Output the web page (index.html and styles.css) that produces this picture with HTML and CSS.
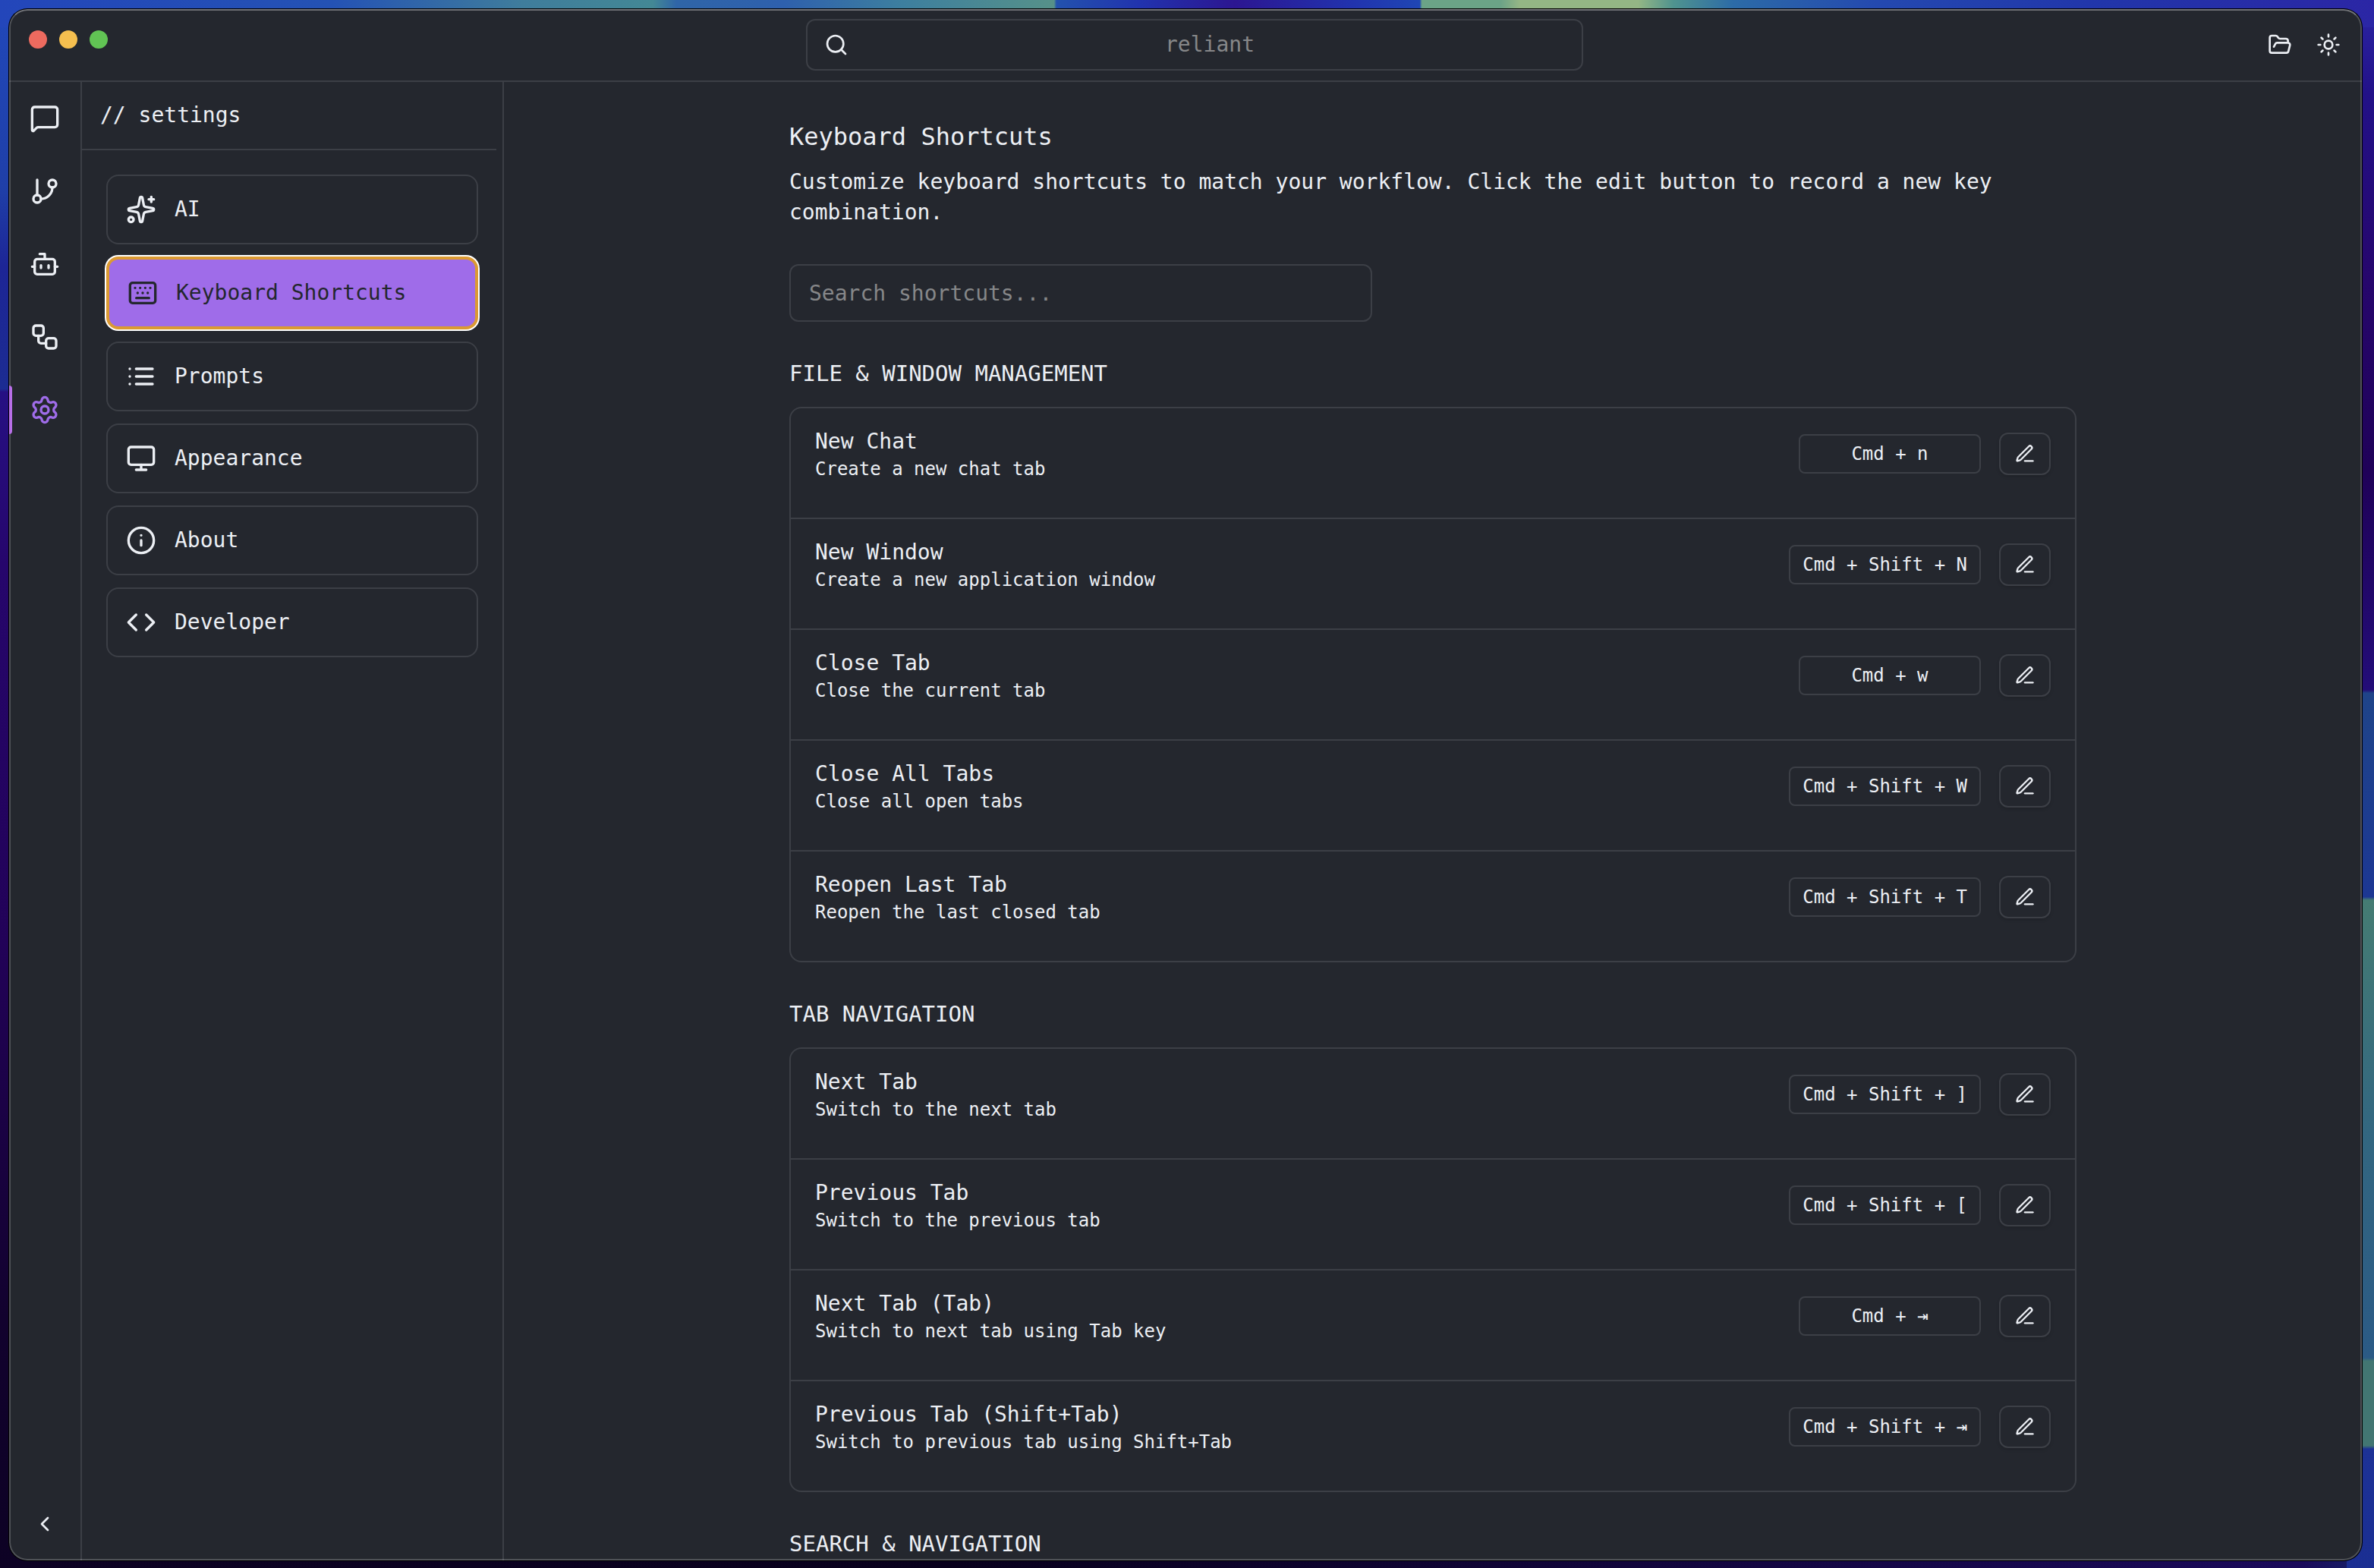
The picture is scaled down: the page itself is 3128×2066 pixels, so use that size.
FILE: index.html
```html
<!DOCTYPE html>
<html lang="en">
<head>
<meta charset="utf-8">
<meta name="viewport" content="width=device-width, initial-scale=1">
<title>reliant – settings</title>
<link rel="stylesheet" href="styles.css">
</head>
<body>
<svg class="sprite" aria-hidden="true">
  <symbol id="i-pen" viewBox="0 0 24 24"><path d="M12 20h9"/><path d="M16.376 3.622a1 1 0 0 1 3.002 3.002L7.368 18.635a2 2 0 0 1-.855.506l-2.872.838a.5.5 0 0 1-.62-.62l.838-2.872a2 2 0 0 1 .506-.854z"/></symbol>
</svg>
<div class="window">
  <header class="titlebar">
    <div class="lights" aria-hidden="true"><span class="light red"></span><span class="light amber"></span><span class="light green"></span></div>
    <label class="command">
      <svg class="icon sm" viewBox="0 0 24 24" aria-hidden="true"><circle cx="11" cy="11" r="8"/><path d="m21 21-4.3-4.3"/></svg>
      <input type="text" placeholder="reliant" aria-label="Search reliant">
    </label>
    <div class="actions">
      <button type="button" aria-label="Open folder"><svg class="icon sm" viewBox="0 0 24 24"><path d="m6 14 1.5-2.9A2 2 0 0 1 9.24 10H20a2 2 0 0 1 1.94 2.5l-1.54 6a2 2 0 0 1-1.95 1.5H4a2 2 0 0 1-2-2V5a2 2 0 0 1 2-2h3.9a2 2 0 0 1 1.69.9l.81 1.2a2 2 0 0 0 1.67.9H18a2 2 0 0 1 2 2v2"/></svg></button>
      <button type="button" aria-label="Toggle theme"><svg class="icon sm" viewBox="0 0 24 24"><circle cx="12" cy="12" r="4"/><path d="M12 2v2M12 20v2M4.93 4.93l1.41 1.41M17.66 17.66l1.41 1.41M2 12h2M20 12h2M6.34 17.66l-1.41 1.41M19.07 4.93l-1.41 1.41"/></svg></button>
    </div>
  </header>
  <div class="body">
    <nav class="rail" aria-label="Main">
      <button type="button" aria-label="Chat"><svg class="icon" viewBox="0 0 24 24"><path d="M22 17a2 2 0 0 1-2 2H6.828a2 2 0 0 0-1.414.586l-2.202 2.202A.71.71 0 0 1 2 21.286V5a2 2 0 0 1 2-2h16a2 2 0 0 1 2 2z"/></svg></button>
      <button type="button" aria-label="Branches"><svg class="icon" viewBox="0 0 24 24"><path d="M6 3v12"/><circle cx="18" cy="6" r="3"/><circle cx="6" cy="18" r="3"/><path d="M18 9a9 9 0 0 1-9 9"/></svg></button>
      <button type="button" aria-label="Agents"><svg class="icon" viewBox="0 0 24 24"><path d="M12 8V4H8"/><rect width="16" height="12" x="4" y="8" rx="2"/><path d="M2 14h2M20 14h2M15 13v2M9 13v2"/></svg></button>
      <button type="button" aria-label="Workflows"><svg class="icon" viewBox="0 0 24 24"><rect width="8" height="8" x="3" y="3" rx="2"/><path d="M7 11v4a2 2 0 0 0 2 2h4"/><rect width="8" height="8" x="13" y="13" rx="2"/></svg></button>
      <button type="button" class="current" aria-label="Settings"><svg class="icon" viewBox="0 0 24 24"><path d="M9.671 4.136a2.34 2.34 0 0 1 4.659 0 2.34 2.34 0 0 0 3.319 1.915 2.34 2.34 0 0 1 2.33 4.033 2.34 2.34 0 0 0 0 3.831 2.34 2.34 0 0 1-2.33 4.033 2.34 2.34 0 0 0-3.319 1.915 2.34 2.34 0 0 1-4.659 0 2.34 2.34 0 0 0-3.32-1.915 2.34 2.34 0 0 1-2.33-4.033 2.34 2.34 0 0 0 0-3.831A2.34 2.34 0 0 1 6.35 6.051a2.34 2.34 0 0 0 3.319-1.915"/><circle cx="12" cy="12" r="3"/></svg></button>
      <button type="button" class="collapse" aria-label="Collapse sidebar"><svg class="icon sm" viewBox="0 0 24 24"><path d="m15 18-6-6 6-6"/></svg></button>
    </nav>
    <aside class="sidebar">
      <h2 class="sidebar-title">// settings</h2>
      <nav class="sections" aria-label="Settings">
        <a href="#ai"><svg class="icon" viewBox="0 0 24 24"><path d="M11.017 2.814a1 1 0 0 1 1.966 0l1.051 5.558a2 2 0 0 0 1.594 1.594l5.558 1.051a1 1 0 0 1 0 1.966l-5.558 1.051a2 2 0 0 0-1.594 1.594l-1.051 5.558a1 1 0 0 1-1.966 0l-1.051-5.558a2 2 0 0 0-1.594-1.594l-5.558-1.051a1 1 0 0 1 0-1.966l5.558-1.051a2 2 0 0 0 1.594-1.594z"/><path d="M20 2v4M22 4h-4"/><circle cx="4" cy="20" r="2"/></svg>AI</a>
        <a href="#shortcuts" class="selected" aria-current="page"><svg class="icon" viewBox="0 0 24 24"><rect width="20" height="16" x="2" y="4" rx="2"/><path d="M10 8h.01M12 12h.01M14 8h.01M16 12h.01M18 8h.01M6 8h.01M7 16h10M8 12h.01"/></svg>Keyboard Shortcuts</a>
        <a href="#prompts"><svg class="icon" viewBox="0 0 24 24"><path d="M3 12h.01M3 18h.01M3 6h.01M8 12h13M8 18h13M8 6h13"/></svg>Prompts</a>
        <a href="#appearance"><svg class="icon" viewBox="0 0 24 24"><rect width="20" height="14" x="2" y="3" rx="2"/><path d="M8 21h8M12 17v4"/></svg>Appearance</a>
        <a href="#about"><svg class="icon" viewBox="0 0 24 24"><circle cx="12" cy="12" r="10"/><path d="M12 16v-4M12 8h.01"/></svg>About</a>
        <a href="#developer"><svg class="icon" viewBox="0 0 24 24"><path d="m16 18 6-6-6-6M8 6l-6 6 6 6"/></svg>Developer</a>
      </nav>
    </aside>
    <main class="content">
      <div class="page">
        <h1>Keyboard Shortcuts</h1>
        <p class="intro">Customize keyboard shortcuts to match your workflow. Click the edit button to record a new key combination.</p>
        <input class="filter" type="text" placeholder="Search shortcuts..." aria-label="Search shortcuts">

        <section>
          <h2>FILE &amp; WINDOW MANAGEMENT</h2>
          <ul class="card">
            <li><div class="info"><h3>New Chat</h3><p>Create a new chat tab</p></div><kbd>Cmd + n</kbd><button type="button" aria-label="Edit New Chat"><svg class="icon xs"><use href="#i-pen"/></svg></button></li>
            <li><div class="info"><h3>New Window</h3><p>Create a new application window</p></div><kbd>Cmd + Shift + N</kbd><button type="button" aria-label="Edit New Window"><svg class="icon xs"><use href="#i-pen"/></svg></button></li>
            <li><div class="info"><h3>Close Tab</h3><p>Close the current tab</p></div><kbd>Cmd + w</kbd><button type="button" aria-label="Edit Close Tab"><svg class="icon xs"><use href="#i-pen"/></svg></button></li>
            <li><div class="info"><h3>Close All Tabs</h3><p>Close all open tabs</p></div><kbd>Cmd + Shift + W</kbd><button type="button" aria-label="Edit Close All Tabs"><svg class="icon xs"><use href="#i-pen"/></svg></button></li>
            <li><div class="info"><h3>Reopen Last Tab</h3><p>Reopen the last closed tab</p></div><kbd>Cmd + Shift + T</kbd><button type="button" aria-label="Edit Reopen Last Tab"><svg class="icon xs"><use href="#i-pen"/></svg></button></li>
          </ul>
        </section>

        <section>
          <h2>TAB NAVIGATION</h2>
          <ul class="card">
            <li><div class="info"><h3>Next Tab</h3><p>Switch to the next tab</p></div><kbd>Cmd + Shift + ]</kbd><button type="button" aria-label="Edit Next Tab"><svg class="icon xs"><use href="#i-pen"/></svg></button></li>
            <li><div class="info"><h3>Previous Tab</h3><p>Switch to the previous tab</p></div><kbd>Cmd + Shift + [</kbd><button type="button" aria-label="Edit Previous Tab"><svg class="icon xs"><use href="#i-pen"/></svg></button></li>
            <li><div class="info"><h3>Next Tab (Tab)</h3><p>Switch to next tab using Tab key</p></div><kbd>Cmd + ⇥</kbd><button type="button" aria-label="Edit Next Tab (Tab)"><svg class="icon xs"><use href="#i-pen"/></svg></button></li>
            <li><div class="info"><h3>Previous Tab (Shift+Tab)</h3><p>Switch to previous tab using Shift+Tab</p></div><kbd>Cmd + Shift + ⇥</kbd><button type="button" aria-label="Edit Previous Tab (Shift+Tab)"><svg class="icon xs"><use href="#i-pen"/></svg></button></li>
          </ul>
        </section>

        <section>
          <h2>SEARCH &amp; NAVIGATION</h2>
        </section>
      </div>
    </main>
  </div>
</div>
</body>
</html>
```

FILE: styles.css
```css
:root {
  --bg: #24272e;
  --line: #3c3f46;
  --text: #eceff4;
  --muted: #868789;
  --accent: #9f6ce9;
  --focus: #db9a33;
}

* { box-sizing: border-box; margin: 0; padding: 0; }

body {
  height: 100vh;
  padding: 12px 16px 10px 12px;
  overflow: hidden;
  color: var(--text);
  font: 28px/40px "DejaVu Sans Mono", monospace;
  /* desktop wallpaper visible round the window: top, left, right, bottom */
  background:
    linear-gradient(90deg, #2346ba 0, #2452b4 14%, #3f7d9c 22%, #438895 27.5%, #2f65a8 28.5%, #2e60ad 33%, #3d7f9f 38%, #569189 44.4%, #2352ad 44.5%, #2133ae 48%, #2c1691 52%, #2133ae 57%, #1f46b4 59.8%, #6ba387 59.9%, #6ba387 63.2%, #94b685 64%, #94b685 69%, #4f938f 70.5%, #2c6ba7 73%, #2449b0 79%, #2136aa 88%, #2b26a5 100%) top / 100% 36px no-repeat,
    linear-gradient(180deg, #2148ba 0, #1f3fa8 12%, #1d2596 17%, #1c2c92 24.8%, #261083 25%, #26066c 36%, #220258 60%, #12022e 84%, #0d0224 100%) left / 36px 100% no-repeat,
    linear-gradient(180deg, #2b26a5 0, #221188 6%, #26066c 18%, #1f0158 30%, #230d78 44%, #1f4489 44.2%, #1c3793 57.2%, #457c73 57.4%, #336780 72%, #2b5a85 86.6%, #427672 86.8%, #427672 92.2%, #1d3296 92.4%, #1a2e92 100%) right / 36px 100% no-repeat,
    linear-gradient(90deg, #0d0224 0, #08001c 40%, #1a0a5a 97%, #142468 100%) #12022e;
}

button { background: none; border: 0; color: inherit; font: inherit; cursor: pointer; }
input { background: none; border: 0; outline: 0; color: inherit; font: inherit; min-width: 0; }
input::placeholder { color: var(--muted); opacity: 1; }
h1, h2, h3 { font-weight: normal; }
ul { list-style: none; }

.sprite { display: none; }
.icon {
  display: block;
  flex: none;
  width: 40px;
  height: 40px;
  fill: none;
  stroke: currentColor;
  stroke-width: 2;
  stroke-linecap: round;
  stroke-linejoin: round;
}
.icon.sm { width: 32px; height: 32px; }
.icon.xs { width: 28px; height: 28px; }

.window {
  position: relative;
  display: flex;
  flex-direction: column;
  height: 100%;
  border-radius: 24px;
  background: var(--bg);
  box-shadow: 0 0 0 1px #000;
  overflow: hidden;
}
/* light rim drawn over the window's edge */
.window::after {
  content: "";
  position: absolute;
  inset: 0;
  border: 2px solid rgba(255, 255, 255, 0.2);
  border-top-color: rgba(255, 255, 255, 0.35);
  border-radius: 24px;
  pointer-events: none;
}

/* title bar */
.titlebar {
  display: flex;
  flex: none;
  align-items: center;
  justify-content: space-between;
  height: 96px;
  padding: 0 28px 0 26px;
  border-bottom: 2px solid var(--line);
}
.lights { display: flex; gap: 16px; align-self: flex-start; padding: 28px 18px 0 0; }
.light { width: 24px; height: 24px; border-radius: 50%; }
.red { background: #ed6a5f; }
.amber { background: #f5bf4f; }
.green { background: #61c454; }
.command {
  display: flex;
  align-items: center;
  gap: 8px;
  width: 50%;
  max-width: 1024px;
  height: 68px;
  padding: 0 22px;
  border: 2px solid var(--line);
  border-radius: 12px;
}
.command input { flex: 1; text-align: center; }
.actions { display: flex; gap: 32px; }

.body { display: flex; flex: 1; min-height: 0; }

/* icon rail */
.rail {
  display: flex;
  flex: none;
  flex-direction: column;
  width: 96px;
  border-right: 2px solid var(--line);
}
.rail button { position: relative; display: grid; place-items: center; height: 96px; }
.rail .current { color: var(--accent); }
.rail .current::before {
  content: "";
  position: absolute;
  z-index: 1;
  left: 0;
  top: 16px;
  width: 4px;
  height: 64px;
  border-radius: 0 4px 4px 0;
  background: #b86fe8;
}
.rail .collapse { margin-top: auto; }

/* settings sidebar */
.sidebar { flex: none; width: 556px; border-right: 2px solid var(--line); }
.sidebar-title {
  margin-right: 8px;
  padding: 24px;
  border-bottom: 2px solid var(--line);
  font-size: 28px;
}
.sections { display: flex; flex-direction: column; gap: 16px; padding: 32px; }
.sections a {
  display: flex;
  align-items: center;
  gap: 24px;
  padding: 24px;
  border: 2px solid var(--line);
  border-radius: 16px;
  color: inherit;
  text-decoration: none;
}
.sections .selected {
  border: 4px solid var(--focus);
  background: var(--accent);
  box-shadow: 0 0 0 2px #fff;
  color: var(--bg);
}

/* shortcuts page */
.content { flex: 1; min-width: 0; overflow: hidden; }
.page { max-width: 1792px; margin: 0 auto; padding: 48px; }
h1 { font-size: 32px; line-height: 48px; }
.intro { margin-top: 16px; }
.filter {
  display: block;
  width: 768px;
  max-width: 100%;
  height: 76px;
  margin-top: 48px;
  padding: 0 24px;
  border: 2px solid var(--line);
  border-radius: 12px;
}
section { margin-top: 48px; }
section h2 { font-size: 29px; }
.card { margin-top: 24px; border: 2px solid var(--line); border-radius: 16px; }
.card li { display: flex; align-items: center; gap: 24px; padding: 24px 32px 48px; }
.card li + li { border-top: 2px solid var(--line); }
.info { flex: 1; min-width: 0; }
.info h3 { font-size: 28px; line-height: 40px; }
.info p { font-size: 24px; line-height: 32px; }
kbd {
  min-width: 240px;
  padding: 8px 16px;
  border: 2px solid var(--line);
  border-radius: 8px;
  font: 24px/32px "DejaVu Sans Mono", monospace;
  text-align: center;
  white-space: nowrap;
}
.card button {
  display: grid;
  place-items: center;
  width: 68px;
  height: 56px;
  border: 2px solid var(--line);
  border-radius: 12px;
  box-shadow: 0 2px 4px rgba(0, 0, 0, 0.15);
}
```
